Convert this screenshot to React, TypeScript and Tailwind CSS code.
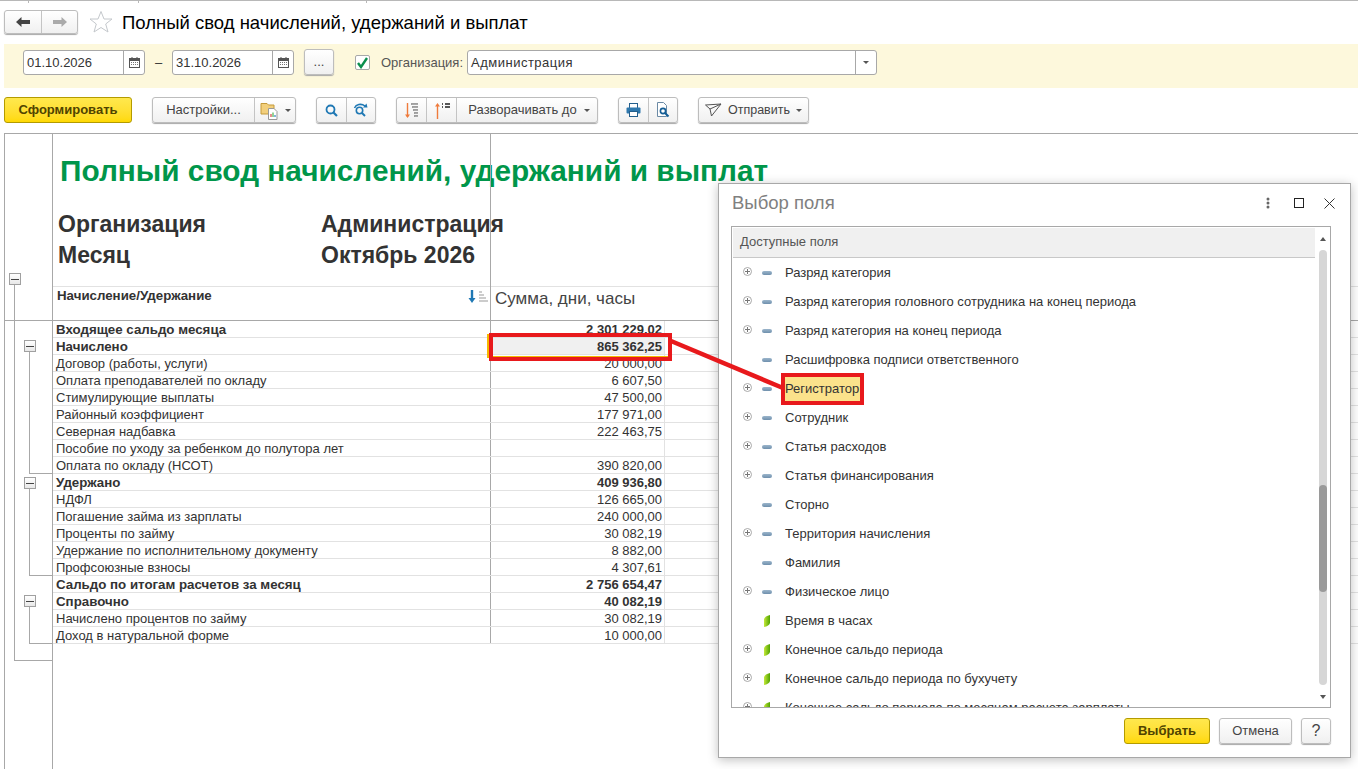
import React from 'react'

type ReportRow = { name: string; value: string; bold?: boolean }

const reportRows: ReportRow[] = [
  { name: 'Входящее сальдо месяца', value: '2 301 229,02', bold: true },
  { name: 'Начислено', value: '865 362,25', bold: true },
  { name: 'Договор (работы, услуги)', value: '20 000,00' },
  { name: 'Оплата преподавателей по окладу', value: '6 607,50' },
  { name: 'Стимулирующие выплаты', value: '47 500,00' },
  { name: 'Районный коэффициент', value: '177 971,00' },
  { name: 'Северная надбавка', value: '222 463,75' },
  { name: 'Пособие по уходу за ребенком до полутора лет', value: '' },
  { name: 'Оплата по окладу (НСОТ)', value: '390 820,00' },
  { name: 'Удержано', value: '409 936,80', bold: true },
  { name: 'НДФЛ', value: '126 665,00' },
  { name: 'Погашение займа из зарплаты', value: '240 000,00' },
  { name: 'Проценты по займу', value: '30 082,19' },
  { name: 'Удержание по исполнительному документу', value: '8 882,00' },
  { name: 'Профсоюзные взносы', value: '4 307,61' },
  { name: 'Сальдо по итогам расчетов за месяц', value: '2 756 654,47', bold: true },
  { name: 'Справочно', value: '40 082,19', bold: true },
  { name: 'Начислено процентов по займу', value: '30 082,19' },
  { name: 'Доход в натуральной форме', value: '10 000,00' }
]

type FieldRow = { name: string; plus: boolean; leaf?: boolean }

const fieldRows: FieldRow[] = [
  { name: 'Разряд категория', plus: true },
  { name: 'Разряд категория головного сотрудника на конец периода', plus: true },
  { name: 'Разряд категория на конец периода', plus: true },
  { name: 'Расшифровка подписи ответственного', plus: false },
  { name: 'Регистратор', plus: true },
  { name: 'Сотрудник', plus: true },
  { name: 'Статья расходов', plus: true },
  { name: 'Статья финансирования', plus: true },
  { name: 'Сторно', plus: false },
  { name: 'Территория начисления', plus: true },
  { name: 'Фамилия', plus: false },
  { name: 'Физическое лицо', plus: true },
  { name: 'Время в часах', plus: false, leaf: true },
  { name: 'Конечное сальдо периода', plus: true, leaf: true },
  { name: 'Конечное сальдо периода по бухучету', plus: true, leaf: true },
  { name: 'Конечное сальдо периода по месяцам расчета зарплаты', plus: true, leaf: true }
]

function Caret() {
  return <span className="inline-block w-0 h-0 border-l-[3px] border-r-[3px] border-t-[3px] border-l-transparent border-r-transparent border-t-[#555]" />
}

function Btn({ className = '', children }: { className?: string; children: React.ReactNode }) {
  return (
    <div className={`h-full flex items-center justify-center border-r border-[#c4c4c4] last:border-r-0 ${className}`}>
      {children}
    </div>
  )
}

function BtnGroup({ className = '', children }: { className?: string; children: React.ReactNode }) {
  return (
    <div className={`h-[26px] flex items-center rounded-[3px] border border-[#bdbdbd] bg-linear-to-b from-white to-[#f0f0f0] shadow-[0_1px_1px_#a8a8a8] text-[13px] text-[#444] ${className}`}>
      {children}
    </div>
  )
}

function CalendarIcon() {
  return (
    <svg width="11" height="11" viewBox="0 0 11 11">
      <rect x="0.5" y="1.5" width="10" height="9" fill="#fff" stroke="#555" />
      <rect x="0.5" y="1.5" width="10" height="2.5" fill="#555" />
      <path d="M3 0v2M8 0v2" stroke="#555" />
      <path d="M2 5.5h7M2 7.5h7" stroke="#777" strokeDasharray="1 1" />
    </svg>
  )
}

function DateField({ value }: { value: string }) {
  return (
    <div className="w-[122px] h-[25px] flex rounded-[3px] border border-[#a8a8a8] bg-white text-[13px] text-[#333]">
      <div className="flex-1 pl-[3px] leading-[23px]">{value}</div>
      <div className="w-[21px] border-l border-[#a8a8a8] flex items-center justify-center"><CalendarIcon /></div>
    </div>
  )
}

function SearchIcon() {
  return (
    <svg width="13" height="13" viewBox="0 0 13 13" fill="none">
      <circle cx="5.5" cy="5.5" r="4" stroke="#1f78b4" strokeWidth="1.8" />
      <path d="M8.5 8.5L12 12" stroke="#1f78b4" strokeWidth="2.2" />
    </svg>
  )
}

function SearchNextIcon() {
  return (
    <svg width="16" height="14" viewBox="0 0 16 14" fill="none">
      <circle cx="6.5" cy="7.5" r="3.2" stroke="#1f78b4" strokeWidth="1.6" />
      <path d="M9 10l3 3" stroke="#1f78b4" strokeWidth="2" />
      <path d="M1.5 5C3 1.5 8 0 12 3" stroke="#1f78b4" strokeWidth="1.5" />
      <path d="M10 4.5L14.5 4.5 13.5 0.5Z" fill="#1f78b4" />
    </svg>
  )
}

function ExpandDownIcon() {
  return (
    <svg width="16" height="17" viewBox="0 0 16 17" fill="none">
      <path d="M3.5 1v14" stroke="#ef7b3c" strokeWidth="1.4" />
      <path d="M1 12.5h5L3.5 16Z" fill="#ef7b3c" />
      <path d="M7 2h7M8 5h6M9 8h5M10 11h4M10 14h4" stroke="#444" />
      <path d="M8 2.5h6M9 5.5h5M10 8.5h4M11 11.5h3M11 14.5h3" stroke="#aaa" />
    </svg>
  )
}

function ExpandUpIcon() {
  return (
    <svg width="16" height="17" viewBox="0 0 16 17" fill="none">
      <path d="M3.5 3v14" stroke="#ef7b3c" strokeWidth="1.4" />
      <path d="M1 4.5h5L3.5 1Z" fill="#ef7b3c" />
      <path d="M8 2h1M8 5h1M11 2h5M11 5h5" stroke="#222" strokeWidth="1.4" />
    </svg>
  )
}

function PrintIcon() {
  return (
    <svg width="15" height="14" viewBox="0 0 15 14" fill="none">
      <rect x="3.5" y="0.5" width="8" height="5" fill="#fff" stroke="#245f8d" />
      <rect x="0.5" y="4.5" width="14" height="6" rx="1" fill="#2f78ad" />
      <rect x="3.5" y="8.5" width="8" height="5" fill="#fff" stroke="#245f8d" />
    </svg>
  )
}

function PreviewIcon() {
  return (
    <svg width="14" height="16" viewBox="0 0 14 16" fill="none">
      <path d="M1.5 0.5h6l3 3v11h-9Z" fill="#fff" stroke="#6b8aa5" />
      <circle cx="7" cy="9" r="2.6" stroke="#145e96" strokeWidth="1.6" />
      <path d="M9 11l3.5 3.5" stroke="#145e96" strokeWidth="2" />
    </svg>
  )
}

function SendIcon() {
  return (
    <svg width="17" height="14" viewBox="0 0 17 14" fill="none" stroke="#555">
      <path d="M0.5 2L16 1 6.5 13 5 6Z" />
      <path d="M5 6L16 1" />
    </svg>
  )
}

function FolderIcon() {
  return (
    <svg width="20" height="19" viewBox="0 0 20 19" fill="none">
      <path d="M1 4V2.5h6L8.5 4H14v9H1Z" fill="#f2cf7c" stroke="#c49a3b" />
      <path d="M8.5 7.5H14l3 3v8H8.5Z" fill="#fff" stroke="#999" />
      <path d="M11 16v-3" stroke="#d9534f" strokeWidth="1.3" />
      <path d="M13 16v-4.5" stroke="#5cb85c" strokeWidth="1.3" />
      <path d="M15 16v-2" stroke="#428bca" strokeWidth="1.3" />
    </svg>
  )
}

function PlusIcon() {
  return (
    <svg width="9" height="9" viewBox="0 0 9 9" fill="none">
      <circle cx="4.5" cy="4.5" r="4" stroke="#a8a8a8" />
      <path d="M2 4.5h5M4.5 2v5" stroke="#777" />
    </svg>
  )
}

function LeafIcon() {
  return (
    <svg width="6" height="12" viewBox="0 0 6 12">
      <defs>
        <linearGradient id="leaf" x1="0" y1="0" x2="1" y2="0">
          <stop offset="0" stopColor="#c4e83a" />
          <stop offset="1" stopColor="#4fa300" />
        </linearGradient>
      </defs>
      <path d="M0 4Q1 1 6 0V8Q5 11 0 12Z" fill="url(#leaf)" />
    </svg>
  )
}

function TreeBox({ className }: { className: string }) {
  return (
    <div className={`absolute w-[12px] h-[12px] border border-[#a0a0a0] bg-linear-to-b from-white to-[#e8e8e8] flex items-center justify-center ${className}`}>
      <div className="w-[8px] h-px bg-[#444]" />
    </div>
  )
}

export default function App() {
  return (
    <div className="relative w-[1358px] h-[769px] overflow-hidden bg-white font-['Liberation_Sans',sans-serif] text-[#333]">
      {/* Верхняя полоска вкладок */}
      <div className="flex h-[3px] border-t border-[#b8b8b8]">
        <div className="w-[29px] h-[2px] border-r border-[#b8b8b8]" />
        <div className="w-[110px] h-[2px] border-r border-[#b8b8b8]" />
        <div className="w-[228px] h-[2px] border-r border-[#b8b8b8]" />
      </div>

      {/* Заголовок */}
      <div className="h-[41px] flex items-center pl-[4px] pb-[3px]">
        <div className="w-[74px] h-[24px] flex rounded-[3px] border border-[#bdbdbd] bg-linear-to-b from-white to-[#f0f0f0] shadow-[0_1px_1px_#a8a8a8]">
          <div className="w-[37px] flex items-center justify-center border-r border-[#c4c4c4]">
            <svg width="14" height="10" viewBox="0 0 14 10"><path d="M0 5L5.5 0V3H14V7H5.5V10Z" fill="#444" /></svg>
          </div>
          <div className="flex-1 flex items-center justify-center">
            <svg width="14" height="10" viewBox="0 0 14 10"><path d="M14 5L8.5 0V3H0V7H8.5V10Z" fill="#aaa" /></svg>
          </div>
        </div>
        <svg className="ml-[11px]" width="24" height="24" viewBox="0 0 24 24" fill="#fff" stroke="#c4c8cc">
          <path d="M12 1.5L15 9H23L16.7 14 19 22 12 17.5 5 22 7.3 14 1 9H9Z" />
        </svg>
        <div className="ml-[9px] mt-[1px] text-[18.5px] text-black">Полный свод начислений, удержаний и выплат</div>
      </div>

      {/* Панель отбора */}
      <div className="h-[44px] ml-[4px] bg-[#fdf8dc] flex items-start pt-[6px] pl-[19px]">
        <DateField value="01.10.2026" />
        <div className="w-[27px] text-center text-[13px] leading-[25px] text-[#333]">–</div>
        <DateField value="31.10.2026" />
        <BtnGroup className="ml-[10px] w-[30px] justify-center -mt-[1px]">...</BtnGroup>
        <div className="ml-[21px] mt-[5px] w-[15px] h-[15px] rounded-[2px] border border-[#a8a8a8] bg-white flex items-center justify-center">
          <svg width="13" height="12" viewBox="0 0 13 12" fill="none"><path d="M2 6l3 4L11 1" stroke="#0b8f4d" strokeWidth="2.4" /></svg>
        </div>
        <div className="ml-[11px] w-[86px] text-[13px] leading-[25px] text-[#555]">Организация:</div>
        <div className="w-[410px] h-[25px] flex rounded-[3px] border border-[#a8a8a8] bg-white text-[13px]">
          <div className="flex-1 pl-[3px] leading-[23px] tracking-[0.5px]">Администрация</div>
          <div className="w-[21px] border-l border-[#a8a8a8] flex items-center justify-center"><Caret /></div>
        </div>
      </div>

      {/* Панель команд */}
      <div className="h-[45px] pt-[9px] pl-[4px] flex items-start">
        <div className="w-[128px] h-[26px] rounded-[3px] border border-[#b39b00] bg-linear-to-b from-[#ffe84d] to-[#ffd900] flex items-center justify-center text-[13px] font-bold text-[#4f4300]">Сформировать</div>
        <BtnGroup className="ml-[20px] w-[144px]">
          <Btn className="w-[102px]">Настройки...</Btn>
          <Btn className="flex-1 gap-[5px] pl-[1px]"><FolderIcon /><Caret /></Btn>
        </BtnGroup>
        <BtnGroup className="ml-[20px] w-[60px]">
          <Btn className="w-[30px]"><SearchIcon /></Btn>
          <Btn className="flex-1"><SearchNextIcon /></Btn>
        </BtnGroup>
        <BtnGroup className="ml-[20px] w-[202px]">
          <Btn className="w-[30px]"><ExpandDownIcon /></Btn>
          <Btn className="w-[30px]"><ExpandUpIcon /></Btn>
          <Btn className="flex-1 gap-[7px] pl-[4px]">Разворачивать до <Caret /></Btn>
        </BtnGroup>
        <BtnGroup className="ml-[20px] w-[60px]">
          <Btn className="w-[30px]"><PrintIcon /></Btn>
          <Btn className="flex-1"><PreviewIcon /></Btn>
        </BtnGroup>
        <BtnGroup className="ml-[20px] w-[111px] gap-[6px] justify-center !text-[12.5px]">
          <SendIcon />Отправить <Caret />
        </BtnGroup>
      </div>

      {/* Отчет */}
      <div className="ml-[4px] h-[636px] flex flex-col border-t border-l border-[#a8a8a8]">
        <div className="h-[187px] shrink-0 flex border-b border-[#a8a8a8]">
          <div className="w-[48px] shrink-0 border-r border-[#a8a8a8]" />
          <div className="flex-1 flex flex-col">
            <div className="h-[153px] shrink-0 border-b border-[#e2e2e2] pt-[19px]">
              <div className="pl-[7px] h-[36px] leading-[36px] text-[29.8px] font-bold text-[#00964a] whitespace-nowrap">Полный свод начислений, удержаний и выплат</div>
              <div className="mt-[20px] pl-[5px] text-[23px] font-bold leading-[31px]">
                <div className="flex"><div className="w-[263px]">Организация</div><div>Администрация</div></div>
                <div className="flex"><div className="w-[263px]">Месяц</div><div>Октябрь 2026</div></div>
              </div>
            </div>
            <div className="flex-1 flex">
              <div className="w-[437px] shrink-0 flex items-start justify-between pl-[4px] pt-[1px]">
                <div className="text-[13.3px] font-bold leading-[15px]">Начисление/Удержание</div>
                <svg className="mt-[2px] mr-[1px]" width="21" height="14" viewBox="0 0 21 14" fill="none">
                  <path d="M4 0v9" stroke="#1f78b4" strokeWidth="2.4" />
                  <path d="M0.5 8h7L4 13Z" fill="#1f78b4" />
                  <path d="M11 2h3M11 5h5M11 8h7M11 11h9" stroke="#999" />
                </svg>
              </div>
              <div className="flex-1 border-l border-[#a8a8a8] pl-[4px] text-[17px] leading-[20px] pt-[2px] text-[#444]">Сумма, дни, часы</div>
            </div>
          </div>
        </div>
        <div className="relative flex-1 flex">
          <div className="relative w-[48px] shrink-0 border-r border-[#a8a8a8]" />
          <div className="flex-1">
            {reportRows.map((row, i) => (
              <div key={row.name} className={`h-[17px] flex text-[13px] leading-[17px] border-b border-[#e2e2e2] ${row.bold ? 'font-bold' : ''}`}>
                <div className={`w-[437px] shrink-0 pl-[3px] whitespace-nowrap ${row.bold ? 'text-[13.3px]' : ''}`}>{row.name}</div>
                <div className={`relative w-[175px] shrink-0 text-right pr-[2px] border-l border-r border-l-[#a8a8a8] border-r-[#e2e2e2] ${i === 1 ? 'bg-[#f0f0f0]' : ''}`}>
                  {row.value}
                </div>
              </div>
            ))}
          </div>
        </div>
      </div>

      {/* Дерево группировок */}
      <div className="absolute left-[14px] top-[284px] w-px h-[376px] bg-[#a8a8a8]" />
      <div className="absolute left-[14px] top-[660px] w-[38px] h-px bg-[#a8a8a8]" />
      <div className="absolute left-[29px] top-[352px] w-px h-[121px] bg-[#a8a8a8]" />
      <div className="absolute left-[29px] top-[473px] w-[23px] h-px bg-[#a8a8a8]" />
      <div className="absolute left-[29px] top-[488px] w-px h-[87px] bg-[#a8a8a8]" />
      <div className="absolute left-[29px] top-[575px] w-[23px] h-px bg-[#a8a8a8]" />
      <div className="absolute left-[29px] top-[607px] w-px h-[36px] bg-[#a8a8a8]" />
      <div className="absolute left-[29px] top-[643px] w-[23px] h-px bg-[#a8a8a8]" />
      <TreeBox className="left-[9px] top-[273px]" />
      <TreeBox className="left-[24px] top-[340px]" />
      <TreeBox className="left-[24px] top-[477px]" />
      <TreeBox className="left-[24px] top-[595px]" />

      {/* Линия на столбце Сумма */}
      <div className="absolute left-[490px] top-[134px] w-px h-[154px] bg-[#a8a8a8]" />
      {/* Выделенная ячейка */}
      <div className="absolute left-[487px] top-[334px] w-[3px] h-[24px] bg-[#f5b800]" />
      <div className="absolute left-[491px] top-[356px] w-[178px] h-px bg-[#f5b800]" />

      {/* Окно выбора поля */}
      <div className="absolute left-[718px] top-[183px] w-[633px] h-[575px] bg-white border border-[#a8a8a8] shadow-[0_2px_10px_rgba(0,0,0,0.25)] flex flex-col">
        <div className="h-[42px] shrink-0 flex items-center pl-[13px] pb-[4px] text-[18.5px] text-[#808080]">
          <div className="flex-1">Выбор поля</div>
          <svg className="mr-[24px]" width="4" height="12" viewBox="0 0 4 12" fill="#666">
            <circle cx="2" cy="2" r="1.5" /><circle cx="2" cy="6" r="1.5" /><circle cx="2" cy="10" r="1.5" />
          </svg>
          <div className="w-[10px] h-[10px] border border-[#222] mr-[20px]" />
          <svg className="mr-[15px]" width="11" height="11" viewBox="0 0 11 11" stroke="#333"><path d="M0.5 0.5l10 10M10.5 0.5l-10 10" /></svg>
        </div>
        <div className="relative ml-[12px] w-[600px] h-[482px] shrink-0 border border-[#a8a8a8] overflow-hidden">
          <div className="h-[30px] mt-[1px] mr-[15px] ml-[1px] bg-[#f0f0f0] border-b border-[#c8c8c8] pl-[7px] leading-[28px] text-[13px] text-[#555]">Доступные поля</div>
          {fieldRows.map((f) => (
            <div key={f.name} className="h-[29px] flex items-center text-[13px] text-[#333] whitespace-nowrap">
              <div className="w-[30px] shrink-0 pl-[11px] flex items-center h-[9px] -mt-[2px]">{f.plus && <PlusIcon />}</div>
              <div className="w-[10px] shrink-0 flex justify-center">
                {f.leaf ? <LeafIcon /> : <div className="w-[10px] h-[4px] rounded-[2px] bg-linear-to-b from-[#9bb5cb] to-[#6f90ad]" />}
              </div>
              <div className={`ml-[13px] ${f.name === 'Регистратор' ? 'bg-[#fbe28b] h-[26px] leading-[26px] w-[75px]' : ''}`}>{f.name}</div>
            </div>
          ))}
          {/* Полоса прокрутки */}
          <div className="absolute right-[3px] top-[23px] w-[8px] h-[435px] rounded-[4px] bg-[#d6d6d6]">
            <div className="absolute left-0 top-[235px] w-[8px] h-[107px] rounded-[4px] bg-[#9a9a9a]" />
          </div>
          <div className="absolute right-[4px] top-[10px] w-0 h-0 border-l-[3px] border-r-[3px] border-b-[4px] border-l-transparent border-r-transparent border-b-[#555]" />
          <div className="absolute right-[4px] bottom-[8px] w-0 h-0 border-l-[3px] border-r-[3px] border-t-[4px] border-l-transparent border-r-transparent border-t-[#555]" />
        </div>
        <div className="mt-[10px] flex justify-end pr-[19px] gap-[9px] text-[13px]">
          <div className="w-[86px] h-[26px] rounded-[3px] border border-[#b39b00] bg-linear-to-b from-[#ffe84d] to-[#ffd900] flex items-center justify-center font-bold text-[#4f4300]">Выбрать</div>
          <BtnGroup className="w-[73px] justify-center">Отмена</BtnGroup>
          <BtnGroup className="w-[30px] justify-center !text-[16px] text-[#222]">?</BtnGroup>
        </div>
      </div>

      {/* Красная разметка */}
      <div className="absolute left-[489px] top-[333px] w-[183px] h-[28px] border-[4px] border-[#e8191c]" />
      <div className="absolute left-[781px] top-[373px] w-[83px] h-[32px] border-[4px] border-[#e8191c]" />
      <svg className="absolute left-[670px] top-[338px]" width="114" height="54" viewBox="0 0 114 54">
        <path d="M1 3L113 50" stroke="#e8191c" strokeWidth="4.5" />
      </svg>
    </div>
  )
}
